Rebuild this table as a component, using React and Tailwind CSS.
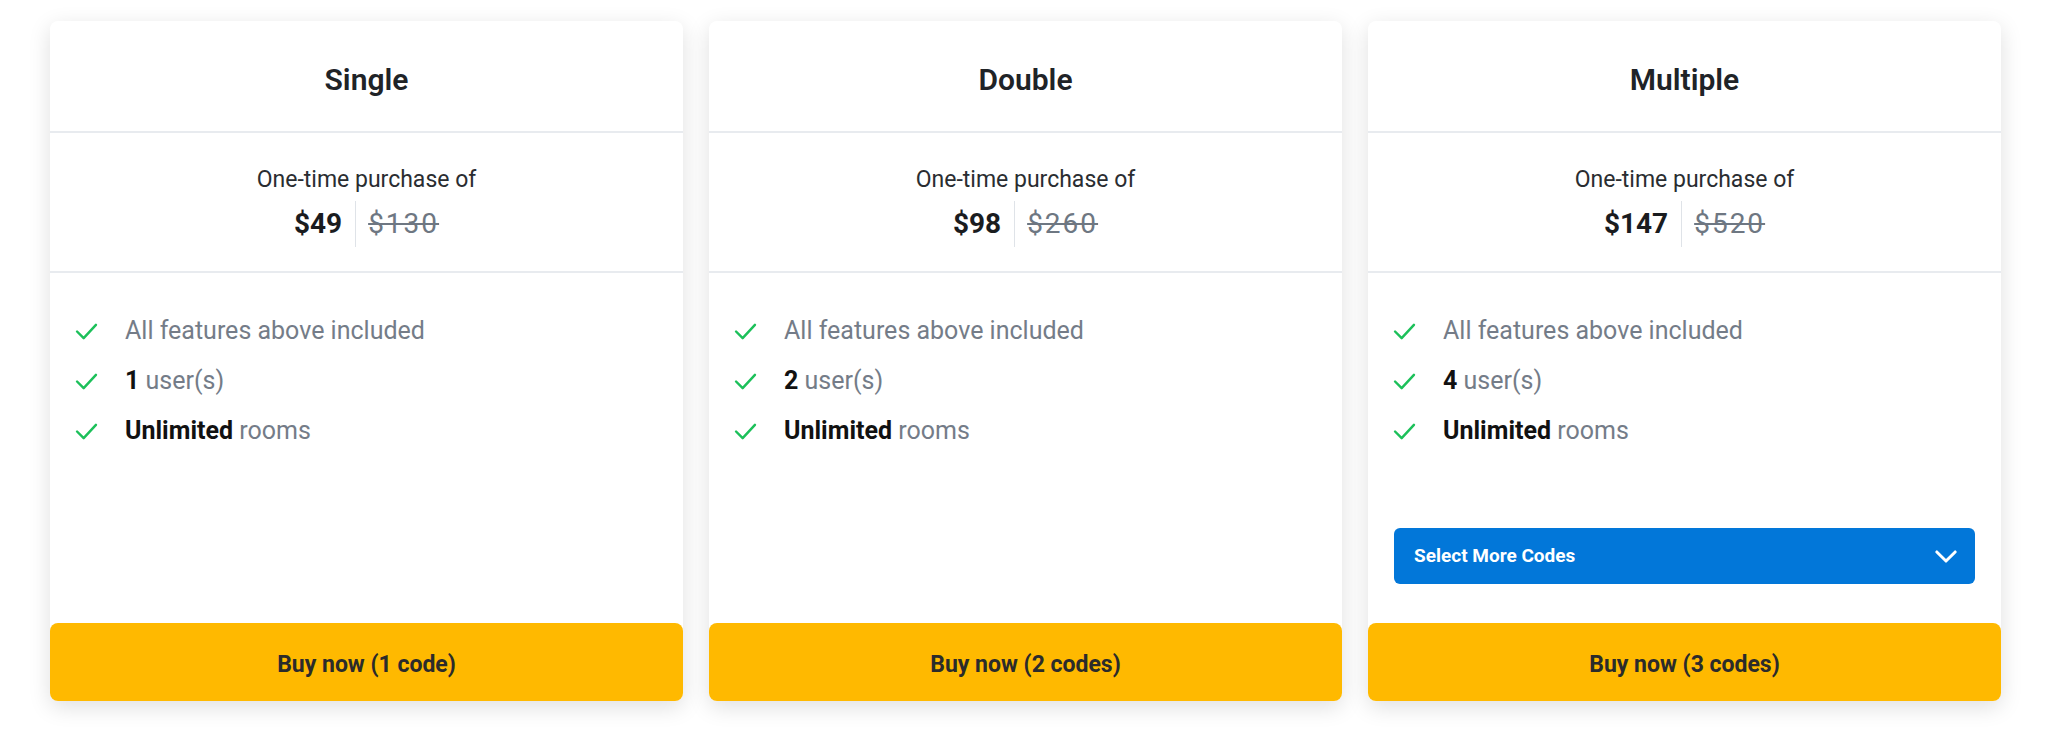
const PLANS = [
  { title: 'Single', price: '$49', was: '$130', users: '1', codes: '1 code' },
  { title: 'Double', price: '$98', was: '$260', users: '2', codes: '2 codes' },
  { title: 'Multiple', price: '$147', was: '$520', users: '4', codes: '3 codes', select: true },
];

const Check = () => (
  <svg viewBox="0 0 24 18" className="w-[23px] h-[17px] shrink-0" fill="none">
    <path d="M2 9l7 7L22 2" stroke="#1cc05a" strokeWidth="2.6" strokeLinecap="round" strokeLinejoin="round" />
  </svg>
);

const Chevron = () => (
  <svg viewBox="0 0 24 14" className="w-[22px] h-[13px]" fill="none">
    <path d="M2 2l10 10L22 2" stroke="white" strokeWidth="3.2" strokeLinecap="round" strokeLinejoin="round" />
  </svg>
);

const Feature = ({ children }) => (
  <li className="flex items-center gap-[27px] h-[30px]">
    <Check />
    <span className="text-[25px] text-[#747c88]">{children}</span>
  </li>
);

const Card = ({ plan }) => (
  <div className="flex-1 h-[680px] flex flex-col bg-white rounded-lg shadow-[0_6px_22px_rgba(0,0,0,0.13)]">
    {/* Title */}
    <div className="h-[112px] flex items-center justify-center pt-[7px] border-b-2 border-[#e8ebef]">
      <h2 className="text-[30px] font-semibold text-[#202327]">{plan.title}</h2>
    </div>

    {/* Price */}
    <div className="h-[140px] flex flex-col items-center pt-[30px] border-b-2 border-[#e8ebef]">
      <p className="text-[23px] text-[#2a2d31]">One-time purchase of</p>
      <div className="mt-[3px] flex items-center">
        <span className="text-[28px] font-bold text-[#1a1c1f] pr-[13px]">{plan.price}</span>
        <span className="w-px h-[46px] bg-[#dfe3e8]" />
        <span className="text-[28px] text-[#6e7782] line-through tracking-[2px] pl-[12px]">{plan.was}</span>
      </div>
    </div>

    {/* Features */}
    <ul className="pl-[25px] pt-[43px] flex flex-col gap-[20px]">
      <Feature>All features above included</Feature>
      <Feature>
        <b className="font-bold text-[#111]">{plan.users}</b> user(s)
      </Feature>
      <Feature>
        <b className="font-bold text-[#111]">Unlimited</b> rooms
      </Feature>
    </ul>

    <div className="flex-1" />

    {plan.select && (
      <div className="px-[26px] pb-[39px]">
        <button className="w-full h-[56px] flex items-center justify-between pl-[20px] pr-[18px] bg-[#0277d9] rounded-md text-white text-[19px] font-bold">
          <span>Select More Codes</span>
          <Chevron />
        </button>
      </div>
    )}

    <button className="h-[78px] w-full pt-[6px] rounded-lg bg-[#ffb900] text-[23px] font-bold text-[#2b2b2b]">
      Buy now ({plan.codes})
    </button>
  </div>
);

export default function App() {
  return (
    <div className="min-h-[753px] bg-white font-['Roboto',sans-serif] pt-[21px] pl-[50px] pr-[47px] flex gap-[26px]">
      {PLANS.map((p) => (
        <Card key={p.title} plan={p} />
      ))}
    </div>
  );
}
